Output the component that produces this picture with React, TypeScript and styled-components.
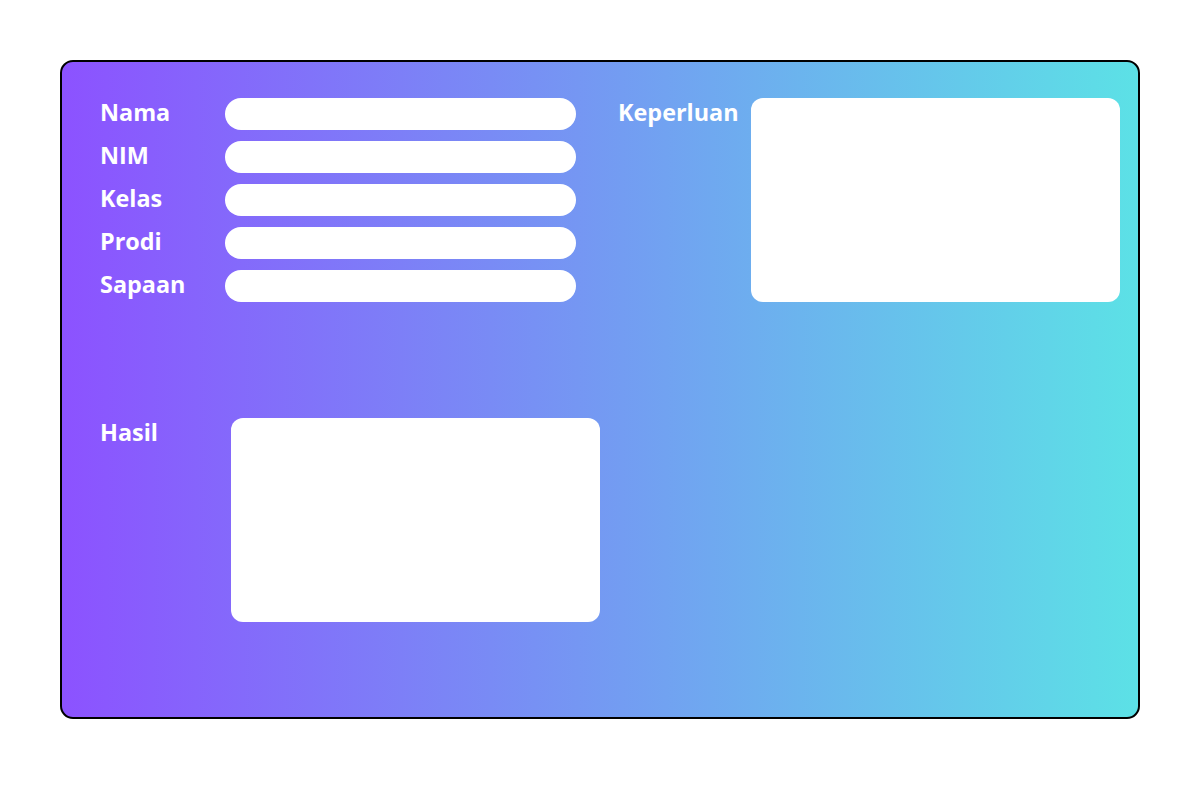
import React from 'react';
import styled, { createGlobalStyle } from 'styled-components';

const GlobalStyle = createGlobalStyle`
  html, body {
    margin: 0;
    padding: 0;
    background: #ffffff;
  }
  * {
    box-sizing: border-box;
  }
`;

const Page = styled.div`
  width: 1200px;
  height: 800px;
  padding: 60px;
`;

const Card = styled.form`
  width: 1080px;
  height: 659px;
  border: 2px solid #000;
  border-radius: 13px;
  background: linear-gradient(90deg, #8c52ff 0%, #5ce1e6 100%);
  padding: 36px 18px 0 38px;
  display: flex;
  flex-direction: column;
  gap: 116px;
  font-family: 'Open Sans', 'Liberation Sans', sans-serif;
  color: #fff;
`;

const TopRow = styled.div`
  display: flex;
  justify-content: space-between;
  align-items: flex-start;
`;

const FieldList = styled.div`
  display: flex;
  flex-direction: column;
  gap: 11px;
`;

const Row = styled.div`
  display: flex;
  align-items: flex-start;
`;

const Label = styled.label<{ $width: number }>`
  width: ${(p) => p.$width}px;
  font-size: 23.4px;
  font-weight: 700;
  line-height: 28px;
`;

const TextInput = styled.input`
  width: 351px;
  height: 32px;
  border: none;
  border-radius: 16px;
  background: #fff;
  outline: none;
  padding: 0 14px;
`;

const AreaRow = styled.div`
  display: flex;
  align-items: flex-start;
`;

const TextArea = styled.textarea`
  width: 369px;
  height: 204px;
  border: none;
  border-radius: 12px;
  background: #fff;
  outline: none;
  resize: none;
  padding: 10px;
`;

const fields = ['Nama', 'NIM', 'Kelas', 'Prodi', 'Sapaan'];

const App: React.FC = () => {
  return (
    <>
      <GlobalStyle />
      <Page>
        <Card onSubmit={(e) => e.preventDefault()}>
          <TopRow>
            <FieldList>
              {fields.map((f) => (
                <Row key={f}>
                  <Label $width={125}>{f}</Label>
                  <TextInput />
                </Row>
              ))}
            </FieldList>
            <AreaRow>
              <Label $width={133}>Keperluan</Label>
              <TextArea />
            </AreaRow>
          </TopRow>
          <AreaRow>
            <Label $width={131}>Hasil</Label>
            <TextArea />
          </AreaRow>
        </Card>
      </Page>
    </>
  );
};

export default App;
